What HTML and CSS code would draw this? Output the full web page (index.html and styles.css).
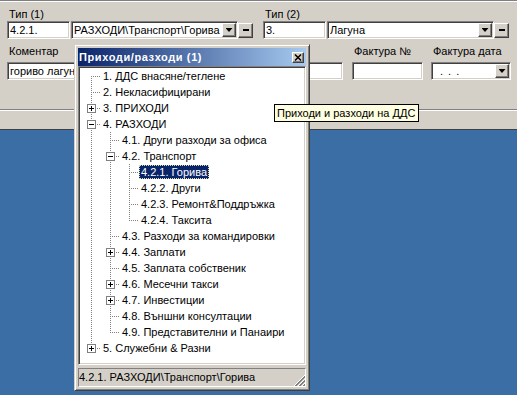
FILE: index.html
```html
<!DOCTYPE html>
<html lang="bg">
<head>
  <meta charset="UTF-8">
  <meta name="viewport" content="width=device-width, initial-scale=1.0">
  <title>Приходи/разходи</title>
  <link rel="stylesheet" href="styles.css">
</head>
<body>
  <div class="form">
    <div class="topline"></div>
    <div class="row1">
      <div class="group">
        <div class="cap">Тип (1)</div>
        <div class="line">
          <div class="edit code">4.2.1.</div>
          <div class="edit combo"><span class="val">РАЗХОДИ\Транспорт\Горива</span><span class="btn drop"></span></div>
          <span class="btn minus"></span>
        </div>
      </div>
      <div class="group">
        <div class="cap">Тип (2)</div>
        <div class="line">
          <div class="edit code">3.</div>
          <div class="edit combo"><span class="val">Лагуна</span><span class="btn drop"></span></div>
          <span class="btn minus"></span>
        </div>
      </div>
    </div>
    <div class="row2">
      <div class="fld comment">
        <div class="cap">Коментар</div>
        <div class="edit">гориво лагуна</div>
      </div>
      <div class="fld invoice">
        <div class="cap">Фактура №</div>
        <div class="edit"></div>
      </div>
      <div class="fld date">
        <div class="cap">Фактура дата</div>
        <div class="edit combo"><span class="val dots">. . .</span><span class="btn drop"></span></div>
      </div>
    </div>
    <div class="etch"></div>
  </div>
  <div class="desktop"></div>

  <div class="popup">
    <div class="caption">
      <span>Приходи/разходи (1)</span>
      <span class="btn close"><svg width="8" height="7" viewBox="0 0 8 7"><path d="M1 0.5l6 6M7 0.5l-6 6" stroke="#000" stroke-width="1.5"/></svg></span>
    </div>
    <div class="tree">
      <div class="node"><span class="g first"></span><span class="label">1. ДДС внасяне/теглене</span></div>
      <div class="node"><span class="g tee"></span><span class="label">2. Некласифицирани</span></div>
      <div class="node"><span class="g tee"><span class="box plus"></span></span><span class="label">3. ПРИХОДИ</span></div>
      <div class="node"><span class="g tee"><span class="box"></span></span><span class="label">4. РАЗХОДИ</span></div>
      <div class="node"><span class="g pipe"></span><span class="g tee"></span><span class="label">4.1. Други разходи за офиса</span></div>
      <div class="node"><span class="g pipe"></span><span class="g tee"><span class="box"></span></span><span class="label">4.2. Транспорт</span></div>
      <div class="node"><span class="g pipe"></span><span class="g pipe"></span><span class="g tee"></span><span class="label sel">4.2.1. Горива</span></div>
      <div class="node"><span class="g pipe"></span><span class="g pipe"></span><span class="g tee"></span><span class="label">4.2.2. Други</span></div>
      <div class="node"><span class="g pipe"></span><span class="g pipe"></span><span class="g tee"></span><span class="label">4.2.3. Ремонт&amp;Поддръжка</span></div>
      <div class="node"><span class="g pipe"></span><span class="g pipe"></span><span class="g elbow"></span><span class="label">4.2.4. Таксита</span></div>
      <div class="node"><span class="g pipe"></span><span class="g tee"></span><span class="label">4.3. Разходи за командировки</span></div>
      <div class="node"><span class="g pipe"></span><span class="g tee"><span class="box plus"></span></span><span class="label">4.4. Заплати</span></div>
      <div class="node"><span class="g pipe"></span><span class="g tee"></span><span class="label">4.5. Заплата собственик</span></div>
      <div class="node"><span class="g pipe"></span><span class="g tee"><span class="box plus"></span></span><span class="label">4.6. Месечни такси</span></div>
      <div class="node"><span class="g pipe"></span><span class="g tee"><span class="box plus"></span></span><span class="label">4.7. Инвестиции</span></div>
      <div class="node"><span class="g pipe"></span><span class="g tee"></span><span class="label">4.8. Външни консултации</span></div>
      <div class="node"><span class="g pipe"></span><span class="g elbow"></span><span class="label">4.9. Представителни и Панаири</span></div>
      <div class="node"><span class="g elbow"><span class="box plus"></span></span><span class="label">5. Служебни &amp; Разни</span></div>
    </div>
    <div class="status">
      <div class="pane">4.2.1. РАЗХОДИ\Транспорт\Горива</div>
      <svg class="grip" width="12" height="12" viewBox="0 0 12 12" shape-rendering="crispEdges">
        <path d="M11 0L0 11M11 4L4 11M11 8L8 11" stroke="#fff"/>
        <path d="M11 1L1 11M11 5L5 11M11 9L9 11" stroke="#808080"/>
        <path d="M11 2L2 11M11 6L6 11M11 10L10 11" stroke="#808080"/>
      </svg>
    </div>
  </div>

  <div class="tip">Приходи и разходи на ДДС</div>
</body>
</html>
```

FILE: styles.css
```css
body {
  margin: 0;
  background: #3a6ea5;
  font: 11px "Liberation Sans", Arial, sans-serif;
  color: #000;
}
.form {
  height: 130px;
  box-sizing: border-box;
  background: #d4d0c8;
  border-bottom: 1px solid #404040;
}
.topline {
  border-top: 1px solid #808080;
  border-bottom: 1px solid #fff;
}
.row1 {
  display: grid;
  grid-template-columns: 246px 246px;
  column-gap: 10px;
  padding: 5px 0 0 7px;
}
.cap {
  height: 14px;
  line-height: 14px;
  padding-left: 2px;
  white-space: nowrap;
}
.line {
  display: flex;
  align-items: center;
}
.edit {
  height: 18px;
  box-sizing: border-box;
  background: #fff;
  border: 1px solid;
  border-color: #808080 #fff #fff #808080;
  box-shadow: inset 1px 1px #404040, inset -1px -1px #d4d0c8;
  padding: 0 2px;
  line-height: 16px;
  white-space: nowrap;
  overflow: hidden;
}
.code {
  width: 63px;
  margin-right: 1px;
}
.combo {
  display: flex;
  align-items: center;
  padding-right: 1px;
}
.line .combo {
  width: 167px;
}
.val {
  flex: 1;
  overflow: hidden;
  white-space: nowrap;
}
.dots {
  padding-left: 6px;
  letter-spacing: 1px;
}
.btn {
  flex: none;
  display: flex;
  align-items: center;
  justify-content: center;
  box-sizing: border-box;
  background: #d4d0c8;
  border: 1px solid;
  border-color: #fff #404040 #404040 #fff;
  box-shadow: inset -1px -1px #808080;
}
.drop {
  width: 14px;
  height: 14px;
}
.drop::after {
  content: "";
  width: 7px;
  height: 4px;
  background: #000;
  clip-path: polygon(0 0, 100% 0, 50% 100%);
}
.minus {
  width: 15px;
  height: 15px;
}
.minus::after {
  content: "";
  width: 6px;
  height: 2px;
  background: #000;
}
.row2 {
  display: flex;
  padding: 5px 0 0 7px;
}
.row2 .cap {
  margin-bottom: 4px;
}
.comment {
  width: 336px;
  margin-right: 9px;
}
.invoice {
  width: 71px;
  margin-right: 8px;
}
.date {
  width: 80px;
}
.etch {
  margin-top: 29px;
  border-top: 1px solid #808080;
  border-bottom: 1px solid #fff;
}
.desktop {
  height: 265px;
  background: #3a6ea5;
}

/* tool window */
.popup {
  position: absolute;
  left: 74px;
  top: 44px;
  width: 236px;
  height: 347px;
  box-sizing: border-box;
  display: flex;
  flex-direction: column;
  background: #d4d0c8;
  border: 1px solid;
  border-color: #d4d0c8 #404040 #404040 #d4d0c8;
  box-shadow: inset 1px 1px #fff, inset -1px -1px #808080;
  padding: 3px;
}
.caption {
  flex: none;
  height: 18px;
  display: flex;
  align-items: center;
  justify-content: space-between;
  padding: 0 2px 0 1px;
  background: linear-gradient(90deg, #0a246a, #a6caf0);
  color: #fff;
  font-weight: bold;
  letter-spacing: 0.6px;
  white-space: nowrap;
}
.close {
  width: 12px;
  height: 11px;
}
.tree {
  flex: 1;
  background: #fff;
  border: 1px solid;
  border-color: #808080 #fff #fff #808080;
  box-shadow: inset 1px 1px #404040, inset -1px -1px #d4d0c8;
  padding: 1px 0 0 3px;
  overflow: hidden;
}
.node {
  display: flex;
  align-items: center;
  height: 16px;
  white-space: nowrap;
}
.g {
  flex: none;
  width: 19px;
  height: 16px;
  display: flex;
  align-items: flex-start;
  justify-content: center;
  background-repeat: no-repeat;
}
.pipe {
  background-image: repeating-linear-gradient(#808080 0 1px, transparent 1px 2px);
  background-size: 1px 16px;
  background-position: 9px 0;
}
.tee {
  background-image: repeating-linear-gradient(#808080 0 1px, transparent 1px 2px),
    repeating-linear-gradient(90deg, #808080 0 1px, transparent 1px 2px);
  background-size: 1px 16px, 10px 1px;
  background-position: 9px 0, 9px 8px;
}
.first {
  background-image: repeating-linear-gradient(#808080 0 1px, transparent 1px 2px),
    repeating-linear-gradient(90deg, #808080 0 1px, transparent 1px 2px);
  background-size: 1px 8px, 10px 1px;
  background-position: 9px 8px, 9px 8px;
}
.elbow {
  background-image: repeating-linear-gradient(#808080 0 1px, transparent 1px 2px),
    repeating-linear-gradient(90deg, #808080 0 1px, transparent 1px 2px);
  background-size: 1px 9px, 10px 1px;
  background-position: 9px 0, 9px 8px;
}
.box {
  width: 9px;
  height: 9px;
  margin-top: 4px;
  box-sizing: border-box;
  border: 1px solid #808080;
  background: linear-gradient(#000, #000) center / 5px 1px no-repeat, #fff;
}
.box.plus {
  background: linear-gradient(#000, #000) center / 5px 1px no-repeat,
    linear-gradient(#000, #000) center / 1px 5px no-repeat, #fff;
}
.label {
  height: 14px;
  line-height: 14px;
  padding: 0 2px;
}
.label.sel {
  background: #0a246a;
  color: #fff;
  outline: 1px dotted #e0e0a0;
  outline-offset: -1px;
}
.status {
  flex: none;
  height: 22px;
  display: flex;
  align-items: flex-end;
}
.pane {
  flex: 1;
  height: 19px;
  box-sizing: border-box;
  line-height: 17px;
  border: 1px solid;
  border-color: #808080 #fff #fff #808080;
  white-space: nowrap;
  overflow: hidden;
}
.grip {
  flex: none;
  margin-left: -12px;
}
.tip {
  position: absolute;
  left: 274px;
  top: 104px;
  height: 18px;
  box-sizing: border-box;
  border: 1px solid #000;
  background: #ffffe1;
  padding: 0 3px 0 2px;
  line-height: 16px;
  white-space: nowrap;
}
```
